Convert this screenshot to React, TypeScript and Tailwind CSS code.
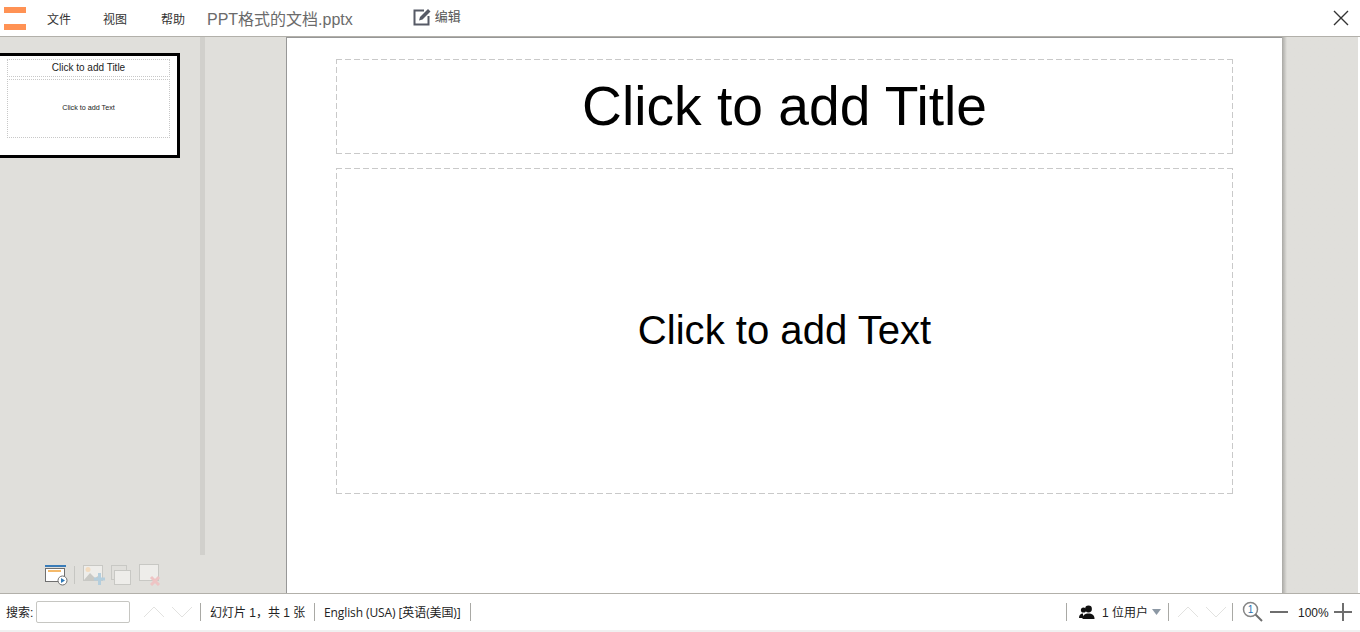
const CJK = "font-['Liberation_Sans','Noto_Sans_CJK_SC',sans-serif]"

// long dashes as on the slide placeholders, a css border can't get this spacing
const DASHED =
  'bg-[repeating-linear-gradient(90deg,#c9c9c9_0_6px,transparent_6px_9px),repeating-linear-gradient(90deg,#c9c9c9_0_6px,transparent_6px_9px),repeating-linear-gradient(0deg,#c9c9c9_0_6px,transparent_6px_9px),repeating-linear-gradient(0deg,#c9c9c9_0_6px,transparent_6px_9px)] bg-[length:100%_1px,100%_1px,1px_100%,1px_100%] bg-[position:top,bottom,left,right] bg-no-repeat'

function Chevron({ up }: { up?: boolean }) {
  return (
    <svg width="22" height="12" viewBox="0 0 22 12" fill="none" stroke="#e2e2e0" strokeWidth="1">
      <path d={up ? 'M1 11 11 1l10 10' : 'M1 1l10 10L21 1'} />
    </svg>
  )
}

function Sep() {
  return <div className="h-[18px] w-px bg-[#a9a9a5]" />
}

function SlideActions() {
  return (
    <div className="flex h-[38px] items-center pt-[2px] pl-[45px]">
      {/* start slideshow */}
      <svg width="23" height="22" viewBox="0 0 23 22" fill="none">
        <rect x="0" y="1" width="21" height="2" fill="#3a7cb8" />
        <rect x="0.5" y="4.5" width="19" height="13" fill="#fff" stroke="#6f6f6f" />
        <rect x="3" y="6" width="13" height="2" fill="#f4b96a" />
        <circle cx="17.5" cy="16.5" r="4.5" fill="#fff" stroke="#6f6f6f" />
        <path d="M16 14l4 2.5-4 2.5z" fill="#2f7ab8" />
      </svg>
      <div className="mr-[8px] ml-[6px] h-[18px] w-px bg-[#c6c6c2]" />
      {/* new slide from image */}
      <svg width="23" height="22" viewBox="0 0 23 22" fill="none" className="mr-[5px]">
        <rect x="0.5" y="1.5" width="19" height="15" fill="#eeedea" stroke="#c8c8c4" />
        <circle cx="5" cy="5.5" r="2.5" fill="#f3dcc0" />
        <path d="M1 16l6-7 5 5 3-2 4 4z" fill="#c9c9c5" />
        <path d="M16.5 9v12M11 15h11" stroke="#b4cedd" strokeWidth="3" />
      </svg>
      {/* duplicate */}
      <svg width="21" height="21" viewBox="0 0 21 21" fill="none" className="mr-[7px]">
        <rect x="0.5" y="0.5" width="15" height="14" fill="#e0dfdb" stroke="#c8c8c4" />
        <rect x="3.5" y="5.5" width="16" height="14" fill="#eeedea" stroke="#c8c8c4" />
      </svg>
      {/* delete */}
      <svg width="22" height="22" viewBox="0 0 22 22" fill="none">
        <rect x="0.5" y="0.5" width="19" height="16" fill="#eeedea" stroke="#c8c8c4" />
        <path d="M12 13l8 8M20 13l-8 8" stroke="#eec4c4" strokeWidth="3" />
      </svg>
    </div>
  )
}

export default function App() {
  return (
    <div className={`flex h-[632px] w-[1360px] flex-col overflow-hidden bg-white ${CJK}`}>
      {/* top bar */}
      <header className="flex h-[37px] shrink-0 items-start border-b border-[#b2b0aa] bg-white">
        <div className="mt-[7px] ml-[4px] flex h-[23px] w-[22px] flex-col justify-between">
          <div className="h-[6px] bg-[#ff9254]" />
          <div className="h-[6px] bg-[#ff9254]" />
        </div>
        <div className="mt-[12px] ml-[21px] flex text-[12px] leading-[16px] text-[#333]">
          <span className="w-[56px]">文件</span>
          <span className="w-[58px]">视图</span>
          <span className="w-[46px]">帮助</span>
        </div>
        <span className="mt-[10px] text-[16px] leading-[20px] text-[#6b6b6b]">PPT格式的文档.pptx</span>
        <div className="mt-[8px] ml-[60px] flex items-center gap-[3px]">
          <svg width="19" height="18" viewBox="0 0 19 18" fill="none">
            <path d="M11 2.500H1.500v14h14V8" stroke="#565a66" strokeWidth="2" />
            <path d="M6 12.500l1-3.500 8-8 2.500 2.500-8 8z" fill="#565a66" />
          </svg>
          <span className="text-[13px] leading-[18px] text-[#555]">编辑</span>
        </div>
        <svg width="16" height="16" viewBox="0 0 16 16" className="mt-[10px] ml-auto mr-[11px]" stroke="#333" strokeWidth="1.400">
          <path d="M1 1l14 14M15 1 1 15" />
        </svg>
      </header>

      {/* workspace */}
      <div className="flex min-h-0 flex-1 pr-[2px]">
        <aside className="flex w-[200px] shrink-0 flex-col bg-[#e0dfdb]">
          <div className="flex-1 pt-[16px]">
            <div className="-ml-[3px] h-[105px] w-[183px] border-[3px] border-black bg-white pt-[3px] pl-[7px] pr-[7px]">
              <div className="flex h-[18px] items-center justify-center border border-dotted border-[#c8c8c8] pb-[2px] text-[10px] text-[#222]">
                Click to add Title
              </div>
              <div className="mt-[2px] flex h-[59px] items-center justify-center border border-dotted border-[#c8c8c8] text-[7.200px] text-[#222]">
                Click to add Text
              </div>
            </div>
          </div>
          <SlideActions />
        </aside>
        <div className="flex w-[86px] shrink-0 bg-[#e0dfdb]">
          <div className="mb-[38px] w-[5px] bg-[#d1d0cc]" />
        </div>

        {/* slide */}
        <main className="flex w-[996px] shrink-0 flex-col border-t border-l border-[#979797] bg-white px-[49px] pt-[21px]">
          <div className={`flex h-[95px] items-center justify-center text-[55.200px] text-black ${DASHED}`}>
            Click to add Title
          </div>
          <div className={`mt-[14px] flex h-[326px] items-center justify-center pb-[2px] text-[40.100px] text-black ${DASHED}`}>
            Click to add Text
          </div>
        </main>
        <div className="flex-1 bg-[#e0dfdb] bg-gradient-to-r from-[#a9a8a4] from-0% to-[#e0dfdb] to-[5px]" />
      </div>

      {/* status bar */}
      <footer className="flex h-[37px] shrink-0 items-center border-t border-[#b2b0aa] bg-white text-[12px] text-[#222]">
        <span className="ml-[6px] w-[30px] pt-[2px]">搜索:</span>
        <div className="h-[22px] w-[94px] rounded-[2px] border border-[#c6c6c2] bg-white" />
        <div className="ml-[13px] flex gap-[6px]">
          <Chevron up />
          <Chevron />
        </div>
        <div className="ml-[7px]"><Sep /></div>
        <span className="ml-[9px] w-[104px] pt-[2px]">幻灯片 1，共 1 张</span>
        <Sep />
        <span className="ml-[9px] w-[146px] pt-[2px] font-['Open_Sans','Noto_Sans_CJK_SC',sans-serif] tracking-[-0.1px]">English (USA) [英语(美国)]</span>
        <Sep />
        <div className="ml-auto"><Sep /></div>
        <svg width="16" height="15" viewBox="0 0 16 15" className="ml-[12px]" fill="#111">
          <circle cx="9.5" cy="4" r="3.4" />
          <path d="M3.500 14c0-4 2.500-5.500 6-5.500s6 1.500 6 5.500z" />
          <circle cx="4.500" cy="5" r="2.600" />
          <path d="M0 13c0-3 1.500-4.500 4-4.500v4.500z" />
        </svg>
        <span className="ml-[7px] pt-[2px]">1 位用户</span>
        <svg width="9" height="6" viewBox="0 0 9 6" className="ml-[4px]" fill="#8c98a4"><path d="M0 0h9L4.500 6z" /></svg>
        <div className="ml-[7px]"><Sep /></div>
        <div className="ml-[8px] flex gap-[6px]">
          <Chevron up />
          <Chevron />
        </div>
        <div className="ml-[5px]"><Sep /></div>
        <svg width="22" height="22" viewBox="0 0 22 22" fill="none" className="ml-[9px]">
          <circle cx="8.500" cy="8.500" r="7" stroke="#858585" strokeWidth="1.500" fill="#fff" />
          <path d="M13.500 13.500 20 20" stroke="#6e6e6e" strokeWidth="2" />
          <text x="8.500" y="12" textAnchor="middle" fontSize="10" fill="#2a72b0" fontFamily="Liberation Sans">1</text>
        </svg>
        <div className="ml-[6px] h-[2px] w-[18px] bg-[#6e6e6e]" />
        <span className="ml-[10px] w-[36px] pt-[2px]">100%</span>
        <svg width="18" height="18" viewBox="0 0 18 18" className="mr-[8px]" stroke="#6e6e6e" strokeWidth="2">
          <path d="M0 9h18M9 0v18" />
        </svg>
      </footer>
      <div className="h-[2px] shrink-0 bg-[#f0f0f0]" />
    </div>
  )
}
